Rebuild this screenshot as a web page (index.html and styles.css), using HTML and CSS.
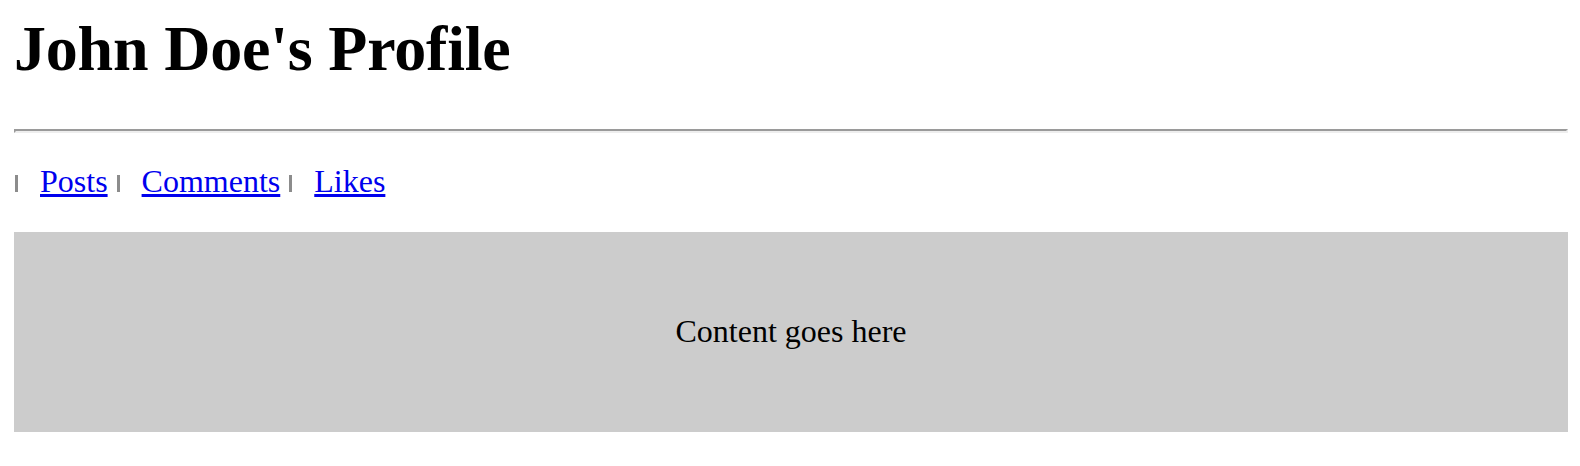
FILE: index.html
```html
<!DOCTYPE html>
<html lang="en">
<head>
<meta charset="utf-8">
<title>John Doe's Profile</title>
<link rel="stylesheet" href="styles.css">
</head>
<body>
  <h1 class="title">John Doe's Profile</h1>
  <hr class="rule">
  <nav class="nav">
    <ul class="nav-list">
      <li class="nav-item"><a class="nav-link" href="#">Posts</a></li>
      <li class="nav-item"><a class="nav-link" href="#">Comments</a></li>
      <li class="nav-item"><a class="nav-link" href="#">Likes</a></li>
    </ul>
  </nav>
  <main class="content">Content goes here</main>
</body>
</html>
```

FILE: styles.css
```css
html, body {
  margin: 0;
  background: #ffffff;
}

body {
  padding: 12px 12px 0 14px;
  font-family: "Liberation Serif", "Times New Roman", serif;
  font-size: 32px;
  color: #000000;
}

.title {
  margin: 0;
  font-size: 64px;
  font-weight: bold;
  line-height: normal;
  letter-spacing: -0.2px;
}

.rule {
  margin: 43px 0 0 0;
  height: 0;
  border-style: solid;
  border-width: 2px;
  border-color: #9a9a9a #eeeeee #eeeeee #9a9a9a;
}

.nav {
  margin-top: 30px;
}

.nav-list {
  display: flex;
  align-items: baseline;
  margin: 0;
  padding: 0 0 0 1px;
  list-style: none;
  line-height: normal;
}

.nav-item {
  display: flex;
  align-items: baseline;
}

.nav-item::before {
  content: "";
  display: inline-block;
  width: 3px;
  height: 17px;
  margin-right: 22px;
  background: #8c8c8c;
}

.nav-link {
  margin-right: 9px;
  color: #0000ee;
  text-decoration: underline;
}

.content {
  display: flex;
  align-items: center;
  justify-content: center;
  box-sizing: border-box;
  margin-top: 32px;
  height: 200px;
  padding-bottom: 2px;
  background: #cccccc;
  font-size: 32px;
}
```
